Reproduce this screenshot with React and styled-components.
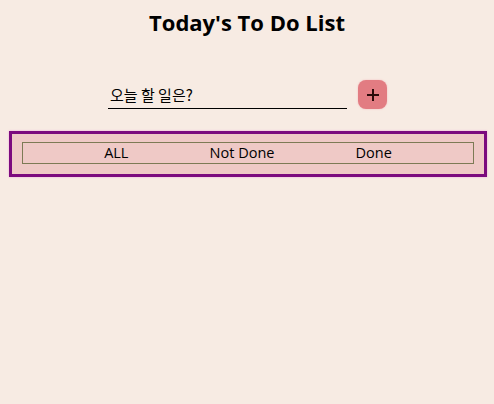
import React, { useState } from "react";
import styled, { createGlobalStyle } from "styled-components";

const GlobalStyle = createGlobalStyle`
  body {
    margin: 0;
    background-color: #f7ebe3;
    font-family: "Open Sans", "Noto Sans CJK KR", sans-serif;
  }
`;

const Container = styled.div`
  display: flex;
  flex-direction: column;
  width: 494px;
  min-height: 404px;
  background-color: #f7ebe3;
`;

const Title = styled.h1`
  margin: 7px 0 0;
  font-size: 22px;
  font-weight: bold;
  text-align: center;
  color: #000;
  line-height: 30px;
`;

const InputRow = styled.div`
  display: flex;
  flex-direction: row;
  align-items: flex-end;
  margin: 43px 0 0 108px;
  gap: 11px;
`;

const TodoInput = styled.input`
  width: 239px;
  height: 28px;
  padding: 0 2px;
  box-sizing: border-box;
  border: none;
  border-bottom: 1px solid #000;
  background: transparent;
  font-family: "Noto Sans CJK KR", sans-serif;
  font-size: 15px;
  color: #000;
  outline: none;
  &::placeholder {
    color: #000;
  }
`;

const AddButton = styled.button`
  width: 29px;
  height: 29px;
  border: none;
  border-radius: 8px;
  background-color: #e27c82;
  box-shadow: 0 0 2px #f2b6bb;
  display: flex;
  align-items: center;
  justify-content: center;
  padding: 0;
  cursor: pointer;
`;

const FilterBox = styled.div`
  margin: 22px 7px 0 9px;
  padding: 8px 10px 10px;
  border: 3px solid #7c0a7e;
  background-color: #efc9c6;
  box-shadow: 0 0 2px #f0a8d8;
`;

const Tabs = styled.div`
  display: flex;
  flex-direction: row;
  justify-content: space-evenly;
  align-items: center;
  height: 20px;
  border: 1px solid #7d7a55;
`;

const Tab = styled.span`
  font-size: 14.5px;
  color: #000;
  line-height: 18px;
  cursor: pointer;
`;

function App() {
  const [text, setText] = useState("");
  const [filter, setFilter] = useState("ALL");

  return (
    <Container>
      <GlobalStyle />
      <Title>Today's To Do List</Title>
      <InputRow>
        <TodoInput
          placeholder="오늘 할 일은?"
          value={text}
          onChange={(e) => setText(e.target.value)}
        />
        <AddButton>
          <svg width="14" height="14" viewBox="0 0 14 14">
            <path d="M7 1v12M1 7h12" stroke="#2a0a0a" strokeWidth="2" />
          </svg>
        </AddButton>
      </InputRow>
      <FilterBox>
        <Tabs>
          {["ALL", "Not Done", "Done"].map((t) => (
            <Tab key={t} onClick={() => setFilter(t)}>
              {t}
            </Tab>
          ))}
        </Tabs>
      </FilterBox>
    </Container>
  );
}

export default App;
